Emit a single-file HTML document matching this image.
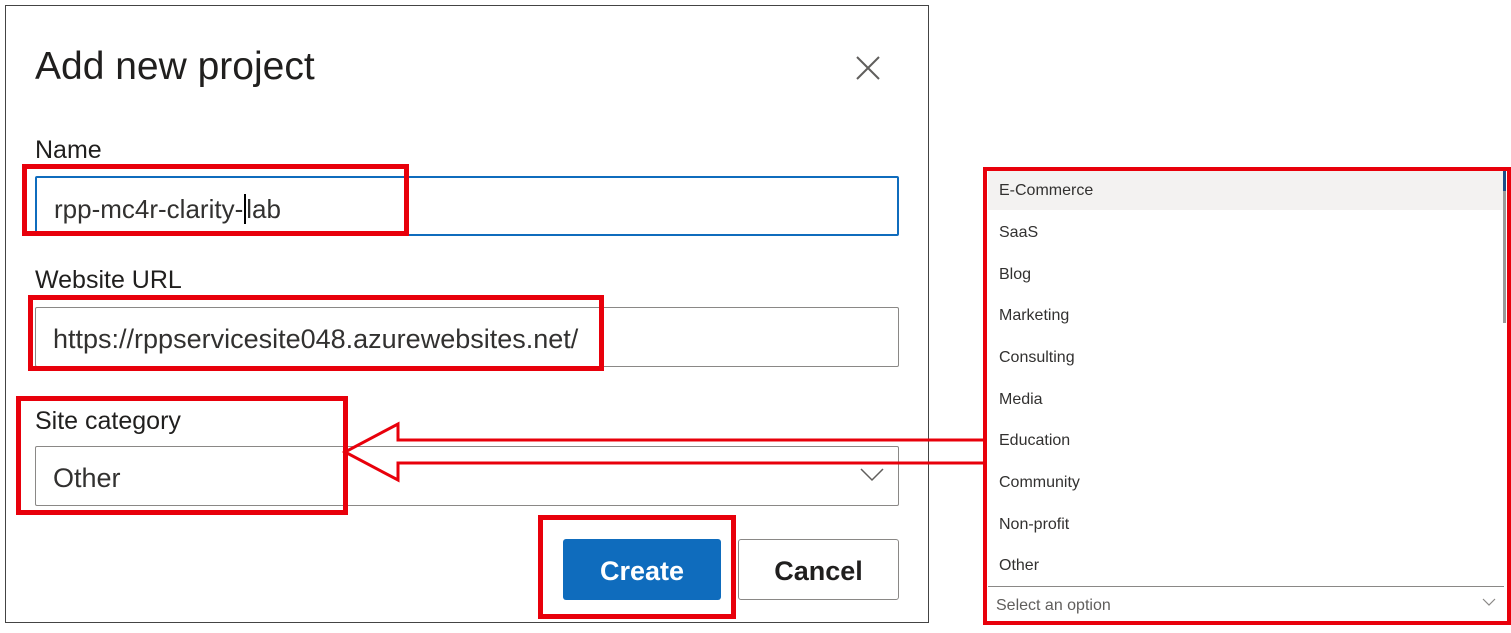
<!DOCTYPE html>
<html><head><meta charset="utf-8"><style>
*{box-sizing:border-box;margin:0;padding:0}
body{width:1511px;height:633px;background:#fff;position:relative;overflow:hidden;font-family:"Liberation Sans",sans-serif;color:#323130}
.a{position:absolute}
.red{position:absolute;border:5px solid #e8000b}
.inp{position:absolute;left:35px;width:864px;height:60px;border:1px solid #8a8886;border-radius:2px;font-size:27px;padding-left:17px;line-height:62px;color:#323130}
.lbl{position:absolute;left:35px;font-size:25px;color:#201f1e}
.opt{position:absolute;left:988px;width:516px;height:42px;font-size:16px;line-height:44px;padding-left:11px;color:#323130}
</style></head><body>
<div class="a" style="left:5px;top:5px;width:924px;height:618px;border:1px solid #444"></div>
<div class="a" style="left:35px;top:45px;font-size:39px;color:#201f1e">Add new project</div>
<svg class="a" style="left:855px;top:55px" width="26" height="26"><path d="M2 2L24 24M24 2L2 24" stroke="#605e5c" stroke-width="2"/></svg>
<div class="lbl" style="top:136px">Name</div>
<div class="inp" style="top:176px;border:2px solid #0f6cbd;line-height:62px;font-size:26px">rpp-mc4r-clarity-<span style="border-left:2px solid #000;margin-left:1px"></span>lab</div>
<div class="red" style="left:22px;top:164px;width:387px;height:72px"></div>
<div class="lbl" style="top:266px">Website URL</div>
<div class="inp" style="top:307px">https://rppservicesite048.azurewebsites.net/</div>
<div class="red" style="left:28px;top:295px;width:576px;height:76px"></div>
<div class="lbl" style="top:407px">Site category</div>
<div class="inp" style="top:446px">Other</div>
<svg class="a" style="left:860px;top:468px" width="24" height="14"><path d="M1 1L12 12L23 1" stroke="#605e5c" stroke-width="1.5" fill="none"/></svg>
<div class="red" style="left:16px;top:396px;width:332px;height:119px"></div>
<svg class="a" style="left:0;top:0" width="1511" height="633"><path d="M985 440H398V424L345 452L398 480V463H985" stroke="#e8000b" stroke-width="3" fill="none"/></svg>
<div class="a" style="left:563px;top:539px;width:158px;height:61px;background:#0f6cbd;border-radius:3px;color:#fff;font-size:27px;font-weight:bold;text-align:center;line-height:64px">Create</div>
<div class="red" style="left:538px;top:515px;width:198px;height:104px"></div>
<div class="a" style="left:738px;top:539px;width:161px;height:61px;border:1px solid #8a8886;border-radius:3px;font-size:27px;font-weight:bold;text-align:center;line-height:62px;color:#201f1e">Cancel</div>
<div class="a" style="left:988px;top:171px;width:516px;height:39px;background:#f3f2f1"></div>
<div class="opt" style="top:169px">E-Commerce</div>
<div class="opt" style="top:211px">SaaS</div>
<div class="opt" style="top:253px">Blog</div>
<div class="opt" style="top:294px">Marketing</div>
<div class="opt" style="top:336px">Consulting</div>
<div class="opt" style="top:378px">Media</div>
<div class="opt" style="top:419px">Education</div>
<div class="opt" style="top:461px">Community</div>
<div class="opt" style="top:503px">Non-profit</div>
<div class="opt" style="top:544px">Other</div>
<div class="a" style="left:1503px;top:171px;width:3px;height:152px;background:#999"></div>
<div class="a" style="left:1503px;top:171px;width:3px;height:20px;background:#1d4e89"></div>
<div class="a" style="left:988px;top:586px;width:516px;height:35px;border-top:1px solid #8a8886;font-size:16px;line-height:38px;padding-left:8px;color:#605e5c">Select an option</div>
<svg class="a" style="left:1482px;top:598px" width="14" height="9"><path d="M1 1L7 7L13 1" stroke="#8a8886" stroke-width="1.2" fill="none"/></svg>
<div class="red" style="left:983px;top:167px;width:528px;height:458px;border-width:4px"></div>
</body></html>
